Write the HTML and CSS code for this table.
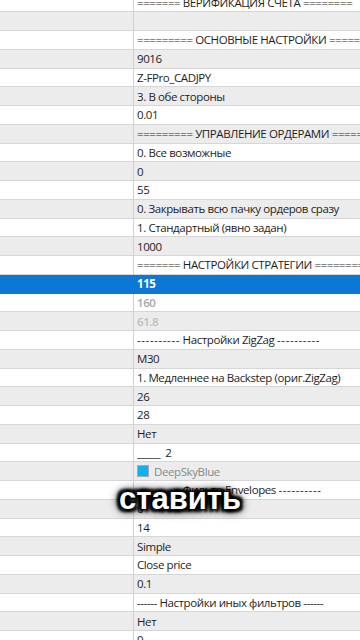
FILE: index.html
```
<!DOCTYPE html>
<html lang="ru">
<head>
<meta charset="utf-8">
<link rel="stylesheet" href="styles.css">
</head>
<body>
<div class="grid">
  <div class="row"><div class="name"></div><div class="val">======= ВЕРИФИКАЦИЯ СЧЕТА ========</div></div>
  <div class="row alt"><div class="name"></div><div class="val"></div></div>
  <div class="row"><div class="name"></div><div class="val">========= ОСНОВНЫЕ НАСТРОЙКИ =========</div></div>
  <div class="row alt"><div class="name"></div><div class="val">9016</div></div>
  <div class="row"><div class="name"></div><div class="val">Z-FPro_CADJPY</div></div>
  <div class="row alt"><div class="name"></div><div class="val">3. В обе стороны</div></div>
  <div class="row"><div class="name"></div><div class="val">0.01</div></div>
  <div class="row alt"><div class="name"></div><div class="val">========= УПРАВЛЕНИЕ ОРДЕРАМИ =========</div></div>
  <div class="row"><div class="name"></div><div class="val">0. Все возможные</div></div>
  <div class="row alt"><div class="name"></div><div class="val">0</div></div>
  <div class="row"><div class="name"></div><div class="val">55</div></div>
  <div class="row alt"><div class="name"></div><div class="val">0. Закрывать всю пачку ордеров сразу</div></div>
  <div class="row"><div class="name"></div><div class="val">1. Стандартный (явно задан)</div></div>
  <div class="row alt"><div class="name"></div><div class="val">1000</div></div>
  <div class="row"><div class="name"></div><div class="val">======= НАСТРОЙКИ СТРАТЕГИИ ========</div></div>
  <div class="row sel"><div class="name"></div><div class="val">115</div></div>
  <div class="row"><div class="name"></div><div class="val dis">160</div></div>
  <div class="row alt"><div class="name"></div><div class="val dis2">61.8</div></div>
  <div class="row"><div class="name"></div><div class="val"><span class="d">----------</span>&nbsp;Настройки ZigZag&nbsp;<span class="d">----------</span></div></div>
  <div class="row alt"><div class="name"></div><div class="val">M30</div></div>
  <div class="row"><div class="name"></div><div class="val">1. Медленнее на Backstep (ориг.ZigZag)</div></div>
  <div class="row alt"><div class="name"></div><div class="val">26</div></div>
  <div class="row"><div class="name"></div><div class="val">28</div></div>
  <div class="row alt"><div class="name"></div><div class="val">Нет</div></div>
  <div class="row"><div class="name"></div><div class="val">_____&nbsp;&nbsp;2</div></div>
  <div class="row alt"><div class="name"></div><div class="val grey"><span class="swatch"></span>DeepSkyBlue</div></div>
  <div class="row"><div class="name"></div><div class="val"><span class="d">----------</span>&nbsp;Фильтр Envelopes&nbsp;<span class="d">----------</span></div></div>
  <div class="row alt"><div class="name"></div><div class="val">0</div></div>
  <div class="row"><div class="name"></div><div class="val">14</div></div>
  <div class="row alt"><div class="name"></div><div class="val">Simple</div></div>
  <div class="row"><div class="name"></div><div class="val">Close price</div></div>
  <div class="row alt"><div class="name"></div><div class="val">0.1</div></div>
  <div class="row"><div class="name"></div><div class="val">------ Настройки иных фильтров ------</div></div>
  <div class="row alt"><div class="name"></div><div class="val">Нет</div></div>
  <div class="row"><div class="name"></div><div class="val">0</div></div>
</div>
<div class="caption">ставить</div>
</body>
</html>
```
FILE: styles.css
```
html, body {
  margin: 0;
  padding: 0;
  width: 360px;
  height: 640px;
  overflow: hidden;
  background: #fff;
}
body {
  position: relative;
  font-family: "Open Sans", "Noto Sans", sans-serif;
  font-size: 11.5px;
  letter-spacing: -0.4px;
  color: #1e1e1e;
}
.grid {
  display: flex;
  flex-direction: column;
  margin-top: -6.5px;
}
.row {
  display: grid;
  grid-template-columns: 134px 1fr;
  height: 18.75px;
  box-sizing: border-box;
  border-bottom: 1px solid #d6d6d6;
  background: #fff;
}
.row.alt { background: #ececec; }
.row.sel { background: #0a78d4; border-bottom-color: #0a78d4; }
.name {
  border-right: 1px solid #d0d0d0;
}
.val {
  padding-left: 3px;
  white-space: nowrap;
  overflow: hidden;
  display: flex;
  align-items: center;
  line-height: 17px;
}
.d { letter-spacing: 0.6px; }
.sel .val { color: #fff; font-weight: 700; }
.sel .name { border-right-color: #0a78d4; }
.val.dis { color: #a6a6a6; font-weight: 600; }
.val.dis2 { color: #bdbdbd; font-weight: 600; }
.val.grey { color: #888; }
.swatch {
  display: inline-block;
  width: 10px;
  height: 10px;
  background: #12b0f0;
  border: 1px solid #a9a9a9;
  margin-right: 5px;
}
.caption {
  position: absolute;
  left: 0;
  right: 0;
  top: 481px;
  text-align: center;
  font-family: "Liberation Sans", Arial, sans-serif;
  font-weight: 700;
  font-size: 31px;
  letter-spacing: 0;
  color: #fff;
  text-shadow:
    0 0 2px #000, 0 0 3px #000, 0 0 4px #000,
    3px 3px 3px #000, -3px -3px 3px #000, 3px -3px 3px #000, -3px 3px 3px #000,
    0 0 10px #000, 0 0 12px #000;
}
```
